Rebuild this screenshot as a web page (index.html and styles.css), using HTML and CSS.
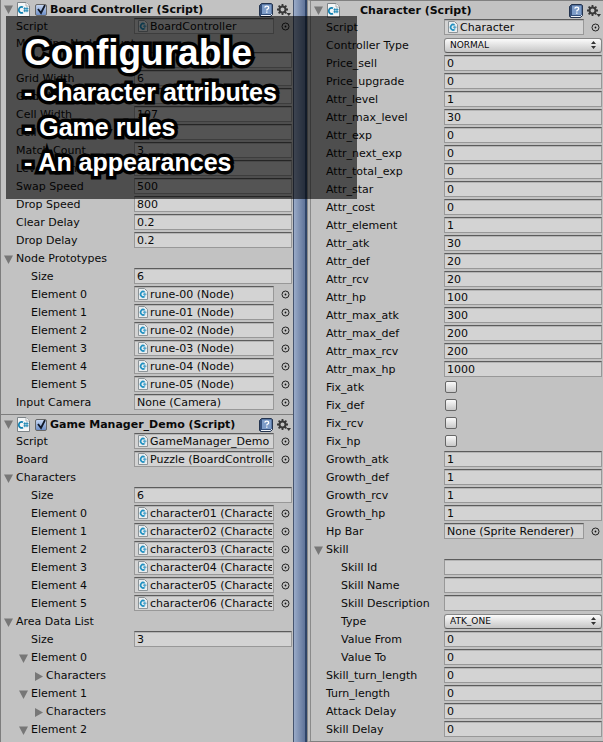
FILE: index.html
```
<!DOCTYPE html>
<html lang="en">
<head>
<meta charset="utf-8">
<title>Inspector</title>
<link rel="stylesheet" href="styles.css">
</head>
<body>
<svg class="defs" aria-hidden="true">
  <symbol id="down" viewBox="0 0 9 9"><path d="M0 .5h9L4.500 9z" fill="#777"/></symbol>
  <symbol id="right" viewBox="0 0 9 9"><path d="M1 0v9l8-4.500z" fill="#777"/></symbol>
  <symbol id="cs" viewBox="0 0 13 15">
    <path d="M.5.5h8.500l3.500 3.500v10.500h-12z" fill="#f4f6f7" stroke="#7d8488"/>
    <path d="M9 .5v3.500h3.500" fill="#fff" stroke="#969da1" stroke-width=".8"/>
    <path d="M6 5.300A2.800 3 0 1 0 6 10.500" fill="none" stroke="#0d7fb0" stroke-width="1.700"/>
    <path d="M7.800 5.200v5M10 5.200v5M6.500 6.700h5M6.500 8.800h5" fill="none" stroke="#0d7fb0" stroke-width=".9"/>
  </symbol>
  <symbol id="csmall" viewBox="0 0 10 12">
    <path d="M.5.5h6l3 3v8h-9z" fill="#e9eef0" stroke="#8d9498"/>
    <path d="M6.500 4A2.500 2.700 0 1 0 6.500 8.500" fill="none" stroke="#1f8fc0" stroke-width="1.700"/>
    <path d="M5 6.200h3.500M6.800 4.500v4" stroke="#3a9cc8" stroke-width="1"/>
  </symbol>
  <symbol id="book" viewBox="0 0 14 14">
    <path d="M.5 2.500l2-2h9.500l1.500 1v10l-2 2H2l-1.500-1z" fill="#34507c" stroke="#24344f"/>
    <path d="M2 12.500h9.500l1.500-1.500" fill="none" stroke="#eef2f7"/>
    <path d="M3 1.500h9.500v9.500H3z" fill="#7d9cc8"/>
    <path d="M5.800 4.600q.2-1.400 1.900-1.400 2 0 2 1.500 0 1-1.200 1.500-.7.300-.7 1.200M7.800 8.500v1.300" fill="none" stroke="#fff" stroke-width="1.300"/>
  </symbol>
  <symbol id="gear" viewBox="0 0 14 12">
    <circle cx="5.500" cy="5.500" r="3" fill="none" stroke="#383838" stroke-width="2"/>
    <path d="M5.500 0v2M5.500 9v2M0 5.500h2M9 5.500h2M1.600 1.600l1.500 1.500M7.900 7.900l1.500 1.500M1.600 9.400l1.500-1.500M7.900 3.100l1.500-1.500" stroke="#383838" stroke-width="1.800"/>
    <path d="M9.500 9h4.500l-2.200 3z" fill="#383838"/>
  </symbol>
  <symbol id="target" viewBox="0 0 9 9"><circle cx="4.500" cy="4.500" r="3.500" fill="none" stroke="#222" stroke-width="1"/><circle cx="4.500" cy="4.500" r=".9" fill="#111"/></symbol>
</svg>

<main class="inspector">
  <section class="panel panel-first">
    <header class="head">
      <button class="fold" aria-label="Fold"><svg class="tri"><use href="#down"/></svg></button>
      <svg class="script"><use href="#cs"/></svg>
      <label class="title"><input type="checkbox" class="tick" checked>Board Controller (Script)</label>
      <button class="tool"><svg class="book"><use href="#book"/></svg></button>
      <button class="tool"><svg class="gear"><use href="#gear"/></svg></button>
    </header>
    <div class="row"><label class="pair"><span class="name">Script</span><span class="object"><svg><use href="#csmall"/></svg><input value="BoardController"></span></label><button class="pick"><svg><use href="#target"/></svg></button></div>
    <div class="row row-short"><span class="name">Matching Node Count</span></div>
    <label class="row"><span class="name d1">X</span><input class="field" value=""></label>
    <label class="row"><span class="name">Grid Width</span><input class="field" value="6"></label>
    <label class="row"><span class="name">Grid Height</span><input class="field" value="5"></label>
    <label class="row"><span class="name">Cell Width</span><input class="field" value="107"></label>
    <label class="row"><span class="name">Cell Height</span><input class="field" value=""></label>
    <label class="row"><span class="name">Match Count</span><input class="field" value="3"></label>
    <label class="row"><span class="name">Level Count</span><input class="field" value=""></label>
    <label class="row"><span class="name">Swap Speed</span><input class="field" value="500"></label>
    <label class="row"><span class="name">Drop Speed</span><input class="field" value="800"></label>
    <label class="row"><span class="name">Clear Delay</span><input class="field" value="0.2"></label>
    <label class="row"><span class="name">Drop Delay</span><input class="field" value="0.2"></label>
    <button class="row foldout"><svg class="tri"><use href="#down"/></svg>Node Prototypes</button>
    <label class="row"><span class="name d1">Size</span><input class="field" value="6"></label>
    <div class="row"><label class="pair"><span class="name d1">Element 0</span><span class="object"><svg><use href="#csmall"/></svg><input value="rune-00 (Node)"></span></label><button class="pick"><svg><use href="#target"/></svg></button></div>
    <div class="row"><label class="pair"><span class="name d1">Element 1</span><span class="object"><svg><use href="#csmall"/></svg><input value="rune-01 (Node)"></span></label><button class="pick"><svg><use href="#target"/></svg></button></div>
    <div class="row"><label class="pair"><span class="name d1">Element 2</span><span class="object"><svg><use href="#csmall"/></svg><input value="rune-02 (Node)"></span></label><button class="pick"><svg><use href="#target"/></svg></button></div>
    <div class="row"><label class="pair"><span class="name d1">Element 3</span><span class="object"><svg><use href="#csmall"/></svg><input value="rune-03 (Node)"></span></label><button class="pick"><svg><use href="#target"/></svg></button></div>
    <div class="row"><label class="pair"><span class="name d1">Element 4</span><span class="object"><svg><use href="#csmall"/></svg><input value="rune-04 (Node)"></span></label><button class="pick"><svg><use href="#target"/></svg></button></div>
    <div class="row"><label class="pair"><span class="name d1">Element 5</span><span class="object"><svg><use href="#csmall"/></svg><input value="rune-05 (Node)"></span></label><button class="pick"><svg><use href="#target"/></svg></button></div>
    <div class="row"><label class="pair"><span class="name">Input Camera</span><span class="object"><input value="None (Camera)"></span></label><button class="pick"><svg><use href="#target"/></svg></button></div>

    <header class="head head-ruled">
      <button class="fold" aria-label="Fold"><svg class="tri"><use href="#down"/></svg></button>
      <svg class="script"><use href="#cs"/></svg>
      <label class="title"><input type="checkbox" class="tick" checked>Game Manager_Demo (Script)</label>
      <button class="tool"><svg class="book"><use href="#book"/></svg></button>
      <button class="tool"><svg class="gear"><use href="#gear"/></svg></button>
    </header>
    <div class="row"><label class="pair"><span class="name">Script</span><span class="object"><svg><use href="#csmall"/></svg><input value="GameManager_Demo"></span></label><button class="pick"><svg><use href="#target"/></svg></button></div>
    <div class="row"><label class="pair"><span class="name">Board</span><span class="object"><svg><use href="#csmall"/></svg><input value="Puzzle (BoardController)"></span></label><button class="pick"><svg><use href="#target"/></svg></button></div>
    <button class="row foldout"><svg class="tri"><use href="#down"/></svg>Characters</button>
    <label class="row"><span class="name d1">Size</span><input class="field" value="6"></label>
    <div class="row"><label class="pair"><span class="name d1">Element 0</span><span class="object"><svg><use href="#csmall"/></svg><input value="character01 (Character)"></span></label><button class="pick"><svg><use href="#target"/></svg></button></div>
    <div class="row"><label class="pair"><span class="name d1">Element 1</span><span class="object"><svg><use href="#csmall"/></svg><input value="character02 (Character)"></span></label><button class="pick"><svg><use href="#target"/></svg></button></div>
    <div class="row"><label class="pair"><span class="name d1">Element 2</span><span class="object"><svg><use href="#csmall"/></svg><input value="character03 (Character)"></span></label><button class="pick"><svg><use href="#target"/></svg></button></div>
    <div class="row"><label class="pair"><span class="name d1">Element 3</span><span class="object"><svg><use href="#csmall"/></svg><input value="character04 (Character)"></span></label><button class="pick"><svg><use href="#target"/></svg></button></div>
    <div class="row"><label class="pair"><span class="name d1">Element 4</span><span class="object"><svg><use href="#csmall"/></svg><input value="character05 (Character)"></span></label><button class="pick"><svg><use href="#target"/></svg></button></div>
    <div class="row"><label class="pair"><span class="name d1">Element 5</span><span class="object"><svg><use href="#csmall"/></svg><input value="character06 (Character)"></span></label><button class="pick"><svg><use href="#target"/></svg></button></div>
    <button class="row foldout"><svg class="tri"><use href="#down"/></svg>Area Data List</button>
    <label class="row"><span class="name d1">Size</span><input class="field" value="3"></label>
    <button class="row foldout f1"><svg class="tri"><use href="#down"/></svg>Element 0</button>
    <button class="row foldout f2"><svg class="tri"><use href="#right"/></svg>Characters</button>
    <button class="row foldout f1"><svg class="tri"><use href="#down"/></svg>Element 1</button>
    <button class="row foldout f2"><svg class="tri"><use href="#right"/></svg>Characters</button>
    <button class="row foldout f1"><svg class="tri"><use href="#down"/></svg>Element 2</button>
  </section>

  <div class="divider"></div>

  <section class="panel panel-second">
    <header class="head">
      <button class="fold" aria-label="Fold"><svg class="tri"><use href="#down"/></svg></button>
      <svg class="script"><use href="#cs"/></svg>
      <span class="title title-plain">Character (Script)</span>
      <button class="tool"><svg class="book"><use href="#book"/></svg></button>
      <button class="tool"><svg class="gear"><use href="#gear"/></svg></button>
    </header>
    <div class="row"><label class="pair"><span class="name">Script</span><span class="object"><svg><use href="#csmall"/></svg><input value="Character"></span></label><button class="pick"><svg><use href="#target"/></svg></button></div>
    <label class="row"><span class="name">Controller Type</span><select class="choice"><option>NORMAL</option></select></label>
    <label class="row"><span class="name">Price_sell</span><input class="field" value="0"></label>
    <label class="row"><span class="name">Price_upgrade</span><input class="field" value="0"></label>
    <label class="row"><span class="name">Attr_level</span><input class="field" value="1"></label>
    <label class="row"><span class="name">Attr_max_level</span><input class="field" value="30"></label>
    <label class="row"><span class="name">Attr_exp</span><input class="field" value="0"></label>
    <label class="row"><span class="name">Attr_next_exp</span><input class="field" value="0"></label>
    <label class="row"><span class="name">Attr_total_exp</span><input class="field" value="0"></label>
    <label class="row"><span class="name">Attr_star</span><input class="field" value="0"></label>
    <label class="row"><span class="name">Attr_cost</span><input class="field" value="0"></label>
    <label class="row"><span class="name">Attr_element</span><input class="field" value="1"></label>
    <label class="row"><span class="name">Attr_atk</span><input class="field" value="30"></label>
    <label class="row"><span class="name">Attr_def</span><input class="field" value="20"></label>
    <label class="row"><span class="name">Attr_rcv</span><input class="field" value="20"></label>
    <label class="row"><span class="name">Attr_hp</span><input class="field" value="100"></label>
    <label class="row"><span class="name">Attr_max_atk</span><input class="field" value="300"></label>
    <label class="row"><span class="name">Attr_max_def</span><input class="field" value="200"></label>
    <label class="row"><span class="name">Attr_max_rcv</span><input class="field" value="200"></label>
    <label class="row"><span class="name">Attr_max_hp</span><input class="field" value="1000"></label>
    <label class="row"><span class="name">Fix_atk</span><input type="checkbox" class="tick"></label>
    <label class="row"><span class="name">Fix_def</span><input type="checkbox" class="tick"></label>
    <label class="row"><span class="name">Fix_rcv</span><input type="checkbox" class="tick"></label>
    <label class="row"><span class="name">Fix_hp</span><input type="checkbox" class="tick"></label>
    <label class="row"><span class="name">Growth_atk</span><input class="field" value="1"></label>
    <label class="row"><span class="name">Growth_def</span><input class="field" value="1"></label>
    <label class="row"><span class="name">Growth_rcv</span><input class="field" value="1"></label>
    <label class="row"><span class="name">Growth_hp</span><input class="field" value="1"></label>
    <div class="row"><label class="pair"><span class="name">Hp Bar</span><span class="object"><input value="None (Sprite Renderer)"></span></label><button class="pick"><svg><use href="#target"/></svg></button></div>
    <button class="row foldout"><svg class="tri"><use href="#down"/></svg>Skill</button>
    <label class="row"><span class="name d1">Skill Id</span><input class="field"></label>
    <label class="row"><span class="name d1">Skill Name</span><input class="field"></label>
    <label class="row"><span class="name d1">Skill Description</span><input class="field"></label>
    <label class="row"><span class="name d1">Type</span><select class="choice"><option>ATK_ONE</option></select></label>
    <label class="row"><span class="name d1">Value From</span><input class="field" value="0"></label>
    <label class="row"><span class="name d1">Value To</span><input class="field" value="0"></label>
    <label class="row"><span class="name">Skill_turn_length</span><input class="field" value="0"></label>
    <label class="row"><span class="name">Turn_length</span><input class="field" value="0"></label>
    <label class="row"><span class="name">Attack Delay</span><input class="field" value="0"></label>
    <label class="row"><span class="name">Skill Delay</span><input class="field" value="0"></label>
  </section>

  <aside class="caption">
    <h1>Configurable</h1>
    <p>- Character attributes</p>
    <p>- Game rules</p>
    <p>- An appearances</p>
  </aside>
</main>
</body>
</html>
```
FILE: styles.css
```
* { box-sizing: border-box; }

body {
  margin: 0;
  background: #c2c2c2;
  color: #0a0a0a;
  font: 11px/16px "DejaVu Sans", sans-serif;
}

.defs { position: absolute; width: 0; height: 0; }

.inspector {
  position: relative;
  display: grid;
  grid-template-columns: 293fr 14px 296fr;
  min-height: 100vh;
}

.panel { min-width: 0; background: #c2c2c2; }
.panel-first { border-left: 1px solid #7d7d7d; }
.panel-second {
  border-left: 4px double #8a8a8a;
  border-top: 1px solid #808080;
  border-bottom: 1px solid #808080;
}

.divider {
  border-left: 1px solid #46546e;
  border-right: 2px solid #2f4468;
  background: linear-gradient(90deg, #9aabc8, #5f7399);
}

button {
  margin: 0;
  padding: 0;
  border: 0;
  background: none;
  color: inherit;
  font: inherit;
  text-align: left;
}

svg { display: block; flex: none; }
.tri { width: 9px; height: 9px; }

.head {
  display: flex;
  align-items: center;
  height: 17px;
  padding: 2px 2px 0 3px;
  font-weight: bold;
}
.head-ruled {
  height: 18px;
  margin-top: 3px;
  border-top: 1px solid #7d7d7d;
}
.fold { margin-right: 4px; }
.script { width: 13px; height: 15px; margin-right: 5px; }
.title { display: flex; align-items: center; gap: 3px; flex: 1; min-width: 0; white-space: nowrap; }
.title-plain { padding-left: 15px; }
.book { width: 14px; height: 14px; }
.gear { width: 14px; height: 12px; margin-left: 4px; }

.row {
  display: flex;
  align-items: center;
  width: 100%;
  height: 18px;
  padding-right: 1px;
  white-space: nowrap;
}
.row-short { height: 16px; }
.pair { display: flex; align-items: center; flex: 1; min-width: 0; }
.name { flex: 0 0 133px; padding: 2px 0 0 15px; }
.d1 { padding-left: 30px; }

.foldout { gap: 3px; padding-top: 2px; padding-left: 3px; }
.f1 { padding-left: 18px; }
.f2 { padding-left: 33px; }

input, select { font: inherit; color: inherit; margin: 0; border-radius: 0; }

.field, .object {
  flex: 1;
  min-width: 0;
  height: 16px;
  border: 1px solid #989898;
  border-top-color: #5c5c5c;
  background: #d3d3d3;
  box-shadow: inset 0 1px #b4b4b4;
}
.field { padding: 2px 2px 0; }
.object { display: flex; align-items: center; gap: 2px; padding: 0 1px 0 3px; }
.object svg { width: 10px; height: 12px; }
.object input { flex: 1; min-width: 0; height: 14px; padding: 2px 0 0; border: 0; background: none; }
.object input:first-child { margin-left: -1px; }

.pick { flex: 0 0 18px; padding-left: 7px; }
.pick svg { width: 9px; height: 9px; }

.tick {
  appearance: none;
  flex: none;
  width: 12px;
  height: 12px;
  border: 1px solid #666;
  border-radius: 2px;
  background: linear-gradient(#fafafa, #c8c8c8);
}
.row .tick { margin-left: 1px; }
.tick:checked {
  background:
    url("data:image/svg+xml,%3Csvg xmlns='http://www.w3.org/2000/svg' viewBox='0 0 10 10'%3E%3Cpath d='M2 4l3 4 4-8' fill='none' stroke='%23101828' stroke-width='1.800'/%3E%3C/svg%3E"),
    linear-gradient(#c5d6f2, #6d8fc8);
}

.choice {
  appearance: none;
  flex: 1;
  min-width: 0;
  height: 15px;
  padding: 0 5px;
  border: 1px solid #858585;
  border-bottom-color: #5c5c5c;
  border-radius: 3px;
  background:
    url("data:image/svg+xml,%3Csvg xmlns='http://www.w3.org/2000/svg' viewBox='0 0 5 8'%3E%3Cpath d='M0 3l2.500-3L5 3zM0 5l2.500 3L5 5z' fill='%23333'/%3E%3C/svg%3E") right 5px center / 5px 8px no-repeat,
    linear-gradient(#fbfbfb, #c6c6c6);
  font-size: 9px;
  line-height: 13px;
}

.caption {
  position: absolute;
  top: 16px;
  left: 6px;
  width: 351px;
  height: 183px;
  padding: 17px 18px;
  background: rgba(0, 0, 0, .6);
  color: #fff;
  font-family: "Liberation Sans", sans-serif;
  font-weight: bold;
  -webkit-text-stroke: 7px #000;
  paint-order: stroke fill;
  stroke-linejoin: round;
}
.caption h1 { margin: 0 0 2px; font-size: 37px; line-height: 40px; }
.caption p { margin: 0; font-size: 25px; line-height: 35px; }
```
